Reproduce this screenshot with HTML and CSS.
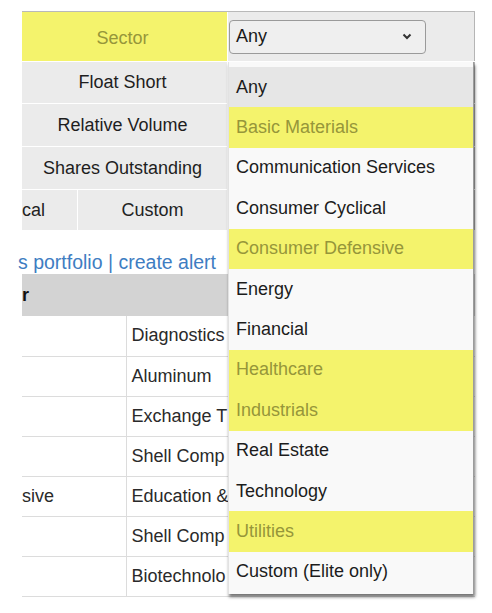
FILE: index.html
```html
<!DOCTYPE html>
<html>
<head>
<meta charset="utf-8">
<link rel="stylesheet" href="styles.css">
</head>
<body>
<div class="page">
  <div class="screener">
    <div class="filters">
      <div class="cell label hl">Sector</div>
      <div class="cell control">
        <div class="select"><span>Any</span>
          <svg class="chev" width="10" height="7" viewBox="0 0 10 7"><polyline points="1.5,1.5 5,5 8.5,1.5" fill="none" stroke="#333" stroke-width="2"/></svg>
        </div>
      </div>
      <div class="cell label">Float Short</div>
      <div class="cell control"></div>
      <div class="cell label">Relative Volume</div>
      <div class="cell control"></div>
      <div class="cell label">Shares Outstanding</div>
      <div class="cell control"></div>
      <div class="tabs">
        <div class="tab tab-cut">cal</div>
        <div class="tab">Custom</div>
      </div>
      <div class="cell control"></div>
    </div>
    <div class="links"><a class="link">s portfolio</a> | <a class="link">create alert</a></div>
    <table class="results">
      <tr class="head"><th class="c1">r</th><th class="c2"></th></tr>
      <tr><td class="c1"></td><td class="c2">Diagnostics</td></tr>
      <tr><td class="c1"></td><td class="c2">Aluminum</td></tr>
      <tr><td class="c1"></td><td class="c2">Exchange T</td></tr>
      <tr><td class="c1"></td><td class="c2">Shell Comp</td></tr>
      <tr><td class="c1">sive</td><td class="c2">Education &amp;</td></tr>
      <tr><td class="c1"></td><td class="c2">Shell Comp</td></tr>
      <tr><td class="c1"></td><td class="c2">Biotechnolo</td></tr>
    </table>
  </div>
  <ul class="dropdown">
    <li class="opt sel">Any</li>
    <li class="opt mark">Basic Materials</li>
    <li class="opt">Communication Services</li>
    <li class="opt">Consumer Cyclical</li>
    <li class="opt mark">Consumer Defensive</li>
    <li class="opt">Energy</li>
    <li class="opt">Financial</li>
    <li class="opt mark">Healthcare</li>
    <li class="opt mark">Industrials</li>
    <li class="opt">Real Estate</li>
    <li class="opt">Technology</li>
    <li class="opt mark">Utilities</li>
    <li class="opt">Custom (Elite only)</li>
  </ul>
</div>
</body>
</html>
```
FILE: styles.css
```css
html, body {
  margin: 0;
  padding: 0;
  background: #fff;
}
body {
  font-family: "Liberation Sans", Arial, sans-serif;
  font-size: 18px;
  color: #222;
}
.page {
  position: relative;
  width: 492px;
  height: 613px;
  overflow: hidden;
  padding-top: 11px;
  box-sizing: border-box;
}
.screener {
  margin-left: 22px;
  width: 453px;
}
.filters {
  border-top: 1px solid #b9b9b9;
  display: grid;
  grid-template-columns: 205px 247px;
  grid-template-rows: 49px 41px 42px 42px 40px;
  column-gap: 1px;
  row-gap: 1px;
  border-bottom: 1px solid #fff;
}
.cell {
  background: #ebebeb;
  display: flex;
  align-items: center;
}
.label {
  justify-content: center;
  padding-right: 4px;
  color: #1e1e1e;
}
.hl {
  background: #f4f36c;
  color: #96963a;
  padding-top: 3px;
  box-sizing: border-box;
}
.control {
  padding-left: 1px;
  border-right: 1px solid #b5b5b5;
}
.select {
  width: 197px;
  height: 34px;
  box-sizing: border-box;
  border: 1px solid #9a9a9a;
  border-radius: 4px;
  background: #efefef;
  display: flex;
  align-items: center;
  justify-content: space-between;
  padding: 0 13px 0 6px;
  color: #1a1a1a;
}
.chev {
  display: block;
}
.tabs {
  display: grid;
  grid-template-columns: 55px 1fr;
  column-gap: 1px;
  background: #fff;
}
.tab {
  background: #ebebeb;
  display: flex;
  align-items: center;
  justify-content: center;
  color: #222;
}
.tab-cut {
  justify-content: flex-start;
  padding-left: 0;
}
.links {
  margin-top: 20px;
  margin-left: -4px;
  line-height: 23px;
  font-size: 19.5px;
  color: #3e7dc2;
}
.link {
  color: #3e7dc2;
}
.results {
  width: 453px;
  border-collapse: collapse;
  font-size: 18px;
  color: #2a2a2a;
}
.results th, .results td {
  height: 40px;
  padding: 0;
  text-align: left;
  white-space: nowrap;
  box-sizing: border-box;
}
.results tr {
  border-bottom: 1px solid #dcdcdc;
}
.results .head {
  background: #d3d3d3;
  border-bottom: none;
}
.results .head th {
  height: 42px;
  font-weight: bold;
  color: #111;
}
.results .c1 {
  width: 104px;
  border-right: 1px solid #dcdcdc;
}
.results .head .c1 {
  border-right: none;
}
.results .c2 {
  padding-left: 5px;
}
.dropdown {
  position: absolute;
  left: 228px;
  top: 62px;
  width: 246px;
  margin: 0;
  padding: 5px 0 0 0;
  list-style: none;
  background: #f9f9f9;
  border-right: 1px solid #9c9c9c;
  border-left: 1px solid #e2e2e2;
  box-sizing: border-box;
  height: 532px;
  box-shadow: 1px 3px 3px rgba(0, 0, 0, 0.55);
}
.opt {
  height: 40.4px;
  display: flex;
  align-items: center;
  padding-left: 7px;
  color: #1c1c1c;
}
.sel {
  background: #e6e6e6;
}
.mark {
  background: #f4f36c;
  color: #96963a;
}
```
